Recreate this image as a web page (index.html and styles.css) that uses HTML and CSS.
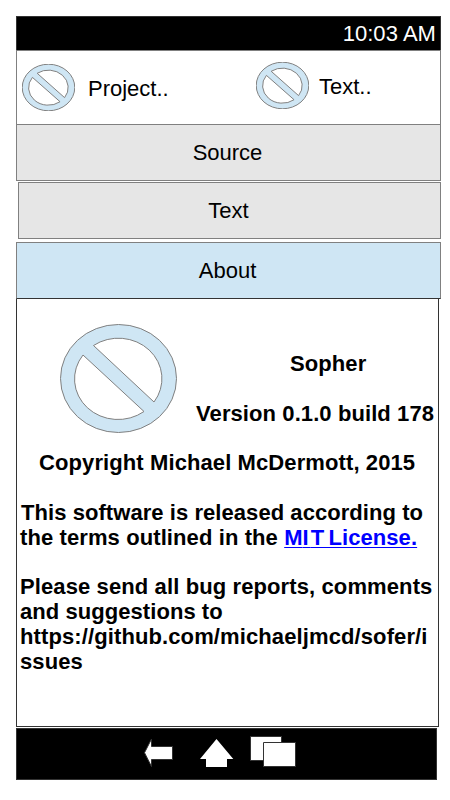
FILE: index.html
```html
<!DOCTYPE html>
<html lang="en">
<head>
<meta charset="utf-8">
<title>Sopher</title>
<link rel="stylesheet" href="styles.css">
</head>
<body>
<svg class="defs" aria-hidden="true">
  <symbol id="no-sign" viewBox="0 0 117 109" preserveAspectRatio="none">
    <path class="sign" fill-rule="evenodd" d="M.5 54.5A58 54 0 0 1 116.5 54.5A58 54 0 0 1 .5 54.5ZM33.5 21.5A43.5 40.5 0 0 1 94 78ZM23 31A43.5 40.5 0 0 0 84 87.5Z"/>
  </symbol>
</svg>
<div class="phone">
  <header class="status">10:03 AM</header>
  <div class="toolbar">
    <div class="tool project"><svg class="icon"><use href="#no-sign"/></svg><span>Project..</span></div>
    <div class="tool text"><svg class="icon"><use href="#no-sign"/></svg><span>Text..</span></div>
  </div>
  <nav class="tabs">
    <div class="tab source">Source</div>
    <div class="tab inset">Text</div>
    <div class="tab active">About</div>
  </nav>
  <main class="panel">
    <div class="intro">
      <svg class="logo"><use href="#no-sign"/></svg>
      <div class="product"><h1>Sopher</h1><p>Version 0.1.0 build 178</p></div>
    </div>
    <p class="copyright">Copyright Michael McDermott, 2015</p>
    <p class="license"><span class="l1">This software is released according to</span><br><span class="l2">the terms outlined in the </span><a href="#license">M<span class="wide">I</span>T License.</a></p>
    <p class="contact">Please send all bug reports, comments<br><span class="l4">and suggestions to</span><br>https://github.com/michaeljmcd/sofer/i<br>ssues</p>
  </main>
  <footer class="navbar">
    <svg class="back" width="30" height="30" viewBox="143 738 30 30"><path d="M144.5 752.7L151.5 739V746.5H172.5V759.5H151.5V766.5Z"/></svg>
    <svg class="home" width="34" height="30" viewBox="200 738 34 30"><path d="M216.5 739L233.3 759H227V767H206V759H199.9Z"/></svg>
    <svg class="recent" width="46" height="31" viewBox="250 736 46 31"><path d="M250.5 736.5H281.5V760.5H250.5Z"/><path d="M263.5 742.5H295.5V766.5H263.5Z"/></svg>
  </footer>
</div>
</body>
</html>
```
FILE: styles.css
```css
* { box-sizing: border-box; }
body { margin: 0; background: #fff; color: #000; font: 22px/25px "Liberation Sans", Arial, sans-serif; }
h1, p { margin: 0; font: inherit; white-space: nowrap; }
.defs { position: absolute; width: 0; height: 0; }
.sign { fill: #cfe6f4; stroke: #808080; stroke-width: 1; vector-effect: non-scaling-stroke; }
.phone { width: 425px; margin: 16px 0 0 16px; }
.status { height: 34px; padding: 5px 4px 0 0; background: #000; border: 1px solid #333; border-bottom: 0; color: #fff; text-align: right; line-height: 24px; letter-spacing: .05px; }
.toolbar { display: flex; height: 74px; border: 1px solid #808080; border-bottom: 0; }
.tool { display: flex; align-items: flex-start; }
.tool span { margin-top: 12px; }
.icon { width: 53px; height: 47px; overflow: visible; }
.project { width: 239px; padding: 13px 0 0 5px; gap: 13px; }
.text { padding-top: 11px; gap: 10px; }
.tab { height: 57px; padding: 15px 2px 0 0; background: #e6e6e6; border: 1px solid #808080; text-align: center; }
.inset { margin: 1px 0 3px 2px; }
.active { background: #cfe6f4; border-bottom-color: #333; }
.panel { width: 423px; height: 428px; border: 1px solid #333; border-top: 0; font-weight: bold; }
.intro { display: flex; height: 151px; }
.logo { width: 117px; height: 109px; margin: 25px 19px 0 43px; }
.product { width: 239px; padding-top: 52px; letter-spacing: .09px; }
.product h1 { padding-left: 94px; margin-bottom: 25px; }
.copyright { padding-left: 22px; margin-bottom: 25px; letter-spacing: .1px; }
.license { padding-left: 4px; margin-bottom: 24px; }
.l1, .l4 { letter-spacing: .06px; }
.l2 { margin-left: -1px; letter-spacing: .1px; }
.contact { padding-left: 3px; letter-spacing: .11px; }
a { color: #00f; letter-spacing: .08px; word-spacing: -2px; text-decoration-thickness: 1px; text-underline-offset: 2px; }
.wide { letter-spacing: 2px; }
.navbar { display: flex; width: 421px; height: 52px; margin-top: 1px; padding: 9px 0 0 126px; background: #000; border: 1px solid #333; }
.navbar path { fill: #fff; stroke: #333; }
.home { margin-left: 27px; }
.home path { stroke: none; }
.recent { margin: -2px 0 0 16px; }
```
